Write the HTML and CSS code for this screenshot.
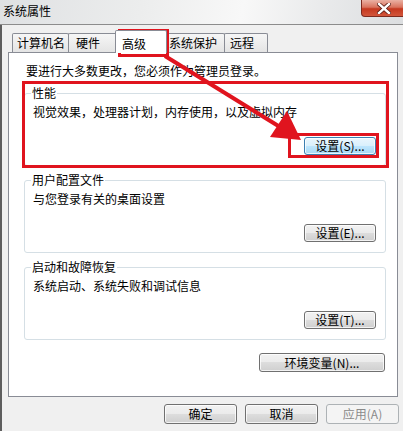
FILE: index.html
```html
<!DOCTYPE html>
<html lang="zh-CN">
<head>
  <meta charset="UTF-8" />
  <title>系统属性</title>
  <link rel="stylesheet" href="styles.css">
</head>
<body>
  <div class="titlebar">
    <span class="title">系统属性</span>
    <span class="close">
      <svg width="14" height="11" viewBox="0 0 14 11">
        <path d="M2 1 L12 10 M12 1 L2 10" stroke="#5a1c14" stroke-width="4" stroke-linecap="square"/>
        <path d="M2 1 L12 10 M12 1 L2 10" stroke="#fff" stroke-width="2.4" stroke-linecap="square"/>
      </svg>
    </span>
  </div>

  <div class="window">
    <div class="tabs">
      <div class="tab t1">计算机名</div>
      <div class="tab t2">硬件</div>
      <div class="tab active">高级</div>
      <div class="tab t4">系统保护</div>
      <div class="tab t5">远程</div>
    </div>

    <div class="panel">
      <p class="notice">要进行大多数更改，您必须作为管理员登录。</p>

      <fieldset class="group first">
        <legend>性能</legend>
        <p class="desc">视觉效果，处理器计划，内存使用，以及虚拟内存</p>
        <div class="row"><button class="btn focus">设置(S)...</button></div>
      </fieldset>

      <fieldset class="group">
        <legend>用户配置文件</legend>
        <p class="desc">与您登录有关的桌面设置</p>
        <div class="row"><button class="btn">设置(E)...</button></div>
      </fieldset>

      <fieldset class="group">
        <legend>启动和故障恢复</legend>
        <p class="desc">系统启动、系统失败和调试信息</p>
        <div class="row"><button class="btn">设置(T)...</button></div>
      </fieldset>

      <div class="row env"><button class="btn wide">环境变量(N)...</button></div>
    </div>

    <div class="footer">
      <button class="btn big">确定</button>
      <button class="btn big">取消</button>
      <button class="btn big" disabled>应用(A)</button>
    </div>
  </div>

  <!-- red annotation marks drawn over the dialog -->
  <svg class="marks" width="403" height="431" viewBox="0 0 403 431">
    <rect x="119.5" y="30.5" width="48" height="25" fill="none" stroke="#e0141e" stroke-width="3"/>
    <rect x="23.5" y="82.5" width="364" height="84" fill="none" stroke="#e0141e" stroke-width="3"/>
    <rect x="289.5" y="134.5" width="88" height="22" fill="none" stroke="#e0141e" stroke-width="3"/>
    <line x1="165" y1="56" x2="280" y2="127" stroke="#e0141e" stroke-width="4"/>
    <polygon points="301,140 270,137 287,111" fill="#e0141e"/>
  </svg>
</body>
</html>
```

FILE: styles.css
```css
html, body {
  margin: 0;
  padding: 0;
  width: 403px;
  height: 431px;
  overflow: hidden;
}

body {
  font-family: "Noto Sans CJK SC", "DejaVu Sans", sans-serif;
  font-size: 12px;
  color: #000;
  background-color: #f0f0f0;
}

.titlebar {
  height: 24px;
  display: flex;
  justify-content: space-between;
  align-items: flex-start;
  border-bottom: 1px solid #8c8c8c;
  background: linear-gradient(100deg, #dfe1e3 0%, #eceded 35%, #f8f8f8 60%, #e9eaeb 80%, #dcdee0 100%);
}

.title {
  margin: 4px 0 0 3px;
  line-height: 14px;
}

.close {
  width: 43px;
  height: 16px;
  margin-right: -3px;
  display: flex;
  align-items: center;
  justify-content: center;
  border: 1px solid #7d2a1e;
  border-top: none;
  border-radius: 0 0 4px 4px;
  background: linear-gradient(#eab1a3 0%, #d9735e 45%, #c5381f 55%, #d2563b 100%);
}

.window {
  height: 406px;
  border-left: 2px solid #5e5e5e;
  box-sizing: border-box;
}

.tabs {
  height: 27px;
  display: flex;
  align-items: flex-end;
  margin-left: 10px;
}

.tab {
  box-sizing: border-box;
  height: 19px;
  line-height: 18px;
  padding-left: 4px;
  margin-right: -1px;
  border: 1px solid #898c95;
  border-bottom: none;
  border-radius: 2px 2px 0 0;
  background: linear-gradient(#f6f6f6, #e4e4e4);
  white-space: nowrap;
}

.t1 { width: 57px; }
.t2 { width: 50px; padding-left: 7px; }
.t4 { width: 60px; padding-left: 3px; }
.t5 { width: 44px; padding-left: 5px; }

.tab.active {
  position: relative;
  z-index: 1;
  width: 52px;
  height: 23px;
  margin: 0 -2px -1px -2px;
  padding: 6px 0 0 6px;
  line-height: 14px;
  background: #fff;
}

.panel {
  box-sizing: border-box;
  height: 345px;
  margin: 0 5px 0 6px;
  border: 1px solid #898c95;
  background-color: #fff;
  overflow: hidden;
}

.notice {
  margin: 11px 0 0 17px;
  line-height: 14px;
}

.group {
  margin: 7px 11px 0 15px;
  padding: 0 9px 10px 8px;
  min-width: 0;
  border: 1px solid #d5dfe5;
  border-radius: 3px;
}

.group.first {
  margin-top: 8px;
}

.group legend {
  padding: 0 1px;
  margin-left: -2px;
  line-height: 14px;
}

.desc {
  margin: 5px 0 0;
  line-height: 14px;
}

.row {
  display: flex;
  justify-content: flex-end;
  margin-top: 18px;
}

.row.env {
  margin: 13px 12px 0 0;
}

.btn {
  box-sizing: border-box;
  width: 72px;
  height: 18px;
  padding: 0;
  font-family: inherit;
  font-size: 12px;
  line-height: 14px;
  color: #000;
  border: 1px solid #707070;
  border-radius: 3px;
  background: linear-gradient(#f2f2f2 0%, #ebebeb 49%, #dddddd 50%, #cfcfcf 100%);
  box-shadow: inset 0 0 0 1px rgba(255, 255, 255, 0.75);
}

.btn.focus {
  border-color: #3c7fb1;
  background: linear-gradient(#eaf6fd 0%, #d9f0fc 49%, #bee6fd 50%, #a7d9f5 100%);
}

.btn.wide {
  width: 126px;
  height: 19px;
}

.btn.big {
  width: 73px;
  height: 20px;
}

.btn:disabled {
  color: #8a8a8a;
  border-color: #adb2b5;
  background: #f4f4f4;
  box-shadow: none;
}

.footer {
  display: flex;
  justify-content: flex-end;
  gap: 8px;
  padding: 7px 4px 0 0;
}

.marks {
  position: absolute;
  top: 0;
  left: 0;
  pointer-events: none;
}
```
